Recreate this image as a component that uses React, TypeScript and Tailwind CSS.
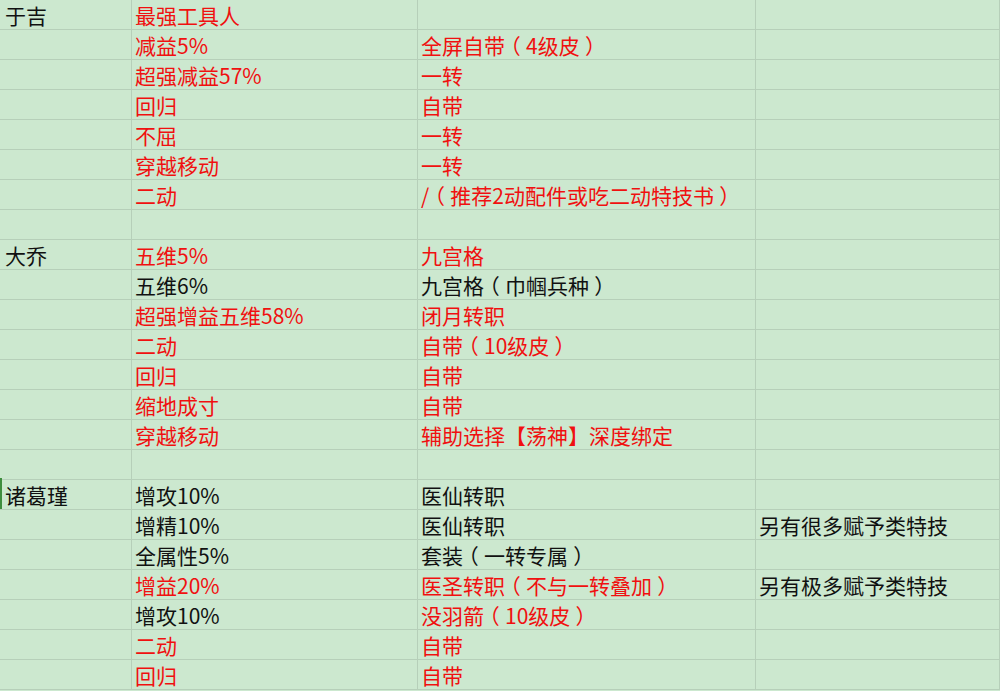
import React from "react";

type Cell = { text: string; red?: boolean };
type Row = [Cell, Cell, Cell, Cell];

const R = (text: string): Cell => ({ text, red: true });
const B = (text: string): Cell => ({ text });
const E: Cell = { text: "" };

const rows: Row[] = [
  [B("于吉"), R("最强工具人"), E, E],
  [E, R("减益5%"), R("全屏自带（4级皮）"), E],
  [E, R("超强减益57%"), R("一转"), E],
  [E, R("回归"), R("自带"), E],
  [E, R("不屈"), R("一转"), E],
  [E, R("穿越移动"), R("一转"), E],
  [E, R("二动"), R("/（推荐2动配件或吃二动特技书）"), E],
  [E, E, E, E],
  [B("大乔"), R("五维5%"), R("九宫格"), E],
  [E, B("五维6%"), B("九宫格（巾帼兵种）"), E],
  [E, R("超强增益五维58%"), R("闭月转职"), E],
  [E, R("二动"), R("自带（10级皮）"), E],
  [E, R("回归"), R("自带"), E],
  [E, R("缩地成寸"), R("自带"), E],
  [E, R("穿越移动"), R("辅助选择【荡神】深度绑定"), E],
  [E, E, E, E],
  [B("诸葛瑾"), B("增攻10%"), B("医仙转职"), E],
  [E, B("增精10%"), B("医仙转职"), B("另有很多赋予类特技")],
  [E, B("全属性5%"), B("套装（一转专属）"), E],
  [E, R("增益20%"), R("医圣转职（不与一转叠加）"), B("另有极多赋予类特技")],
  [E, B("增攻10%"), R("没羽箭（10级皮）"), E],
  [E, R("二动"), R("自带"), E],
  [E, R("回归"), R("自带"), E],
];

// full-width parens sit centred in their box, as in the sheet's font
function Text({ s }: { s: string }) {
  const parts = s.split(/([（）])/);
  return (
    <>
      {parts.map((p, i) =>
        p === "（" || p === "）" ? (
          <span key={i} className="inline-block w-[1em] text-center [font-feature-settings:'halt']">
            {p}
          </span>
        ) : (
          <React.Fragment key={i}>{p}</React.Fragment>
        )
      )}
    </>
  );
}

export default function App() {
  return (
    <div
      className="w-[1000px] h-[691px] overflow-hidden bg-[#cce8cf] text-[21px] text-[#111]"
      style={{ fontFamily: '"Microsoft YaHei", "Noto Sans CJK SC", sans-serif' }}
    >
      <div className="grid grid-cols-[132px_286px_338px_1fr]">
        {rows.map((row, ri) =>
          row.map((c, ci) => (
            <div
              key={`${ri}-${ci}`}
              className={`relative h-[30px] border-b border-r border-[#b6cfb9] leading-[30px] whitespace-nowrap ${
                c.red ? "text-[#f01010]" : "text-[#111]"
              } ${ci === 0 ? "pl-[5px]" : "pl-[3px]"}`}
            >
              {ri === 16 && ci === 0 && (
                <span className="absolute left-0 top-[-2px] h-[31px] w-[2px] bg-[#3e8e3e]" />
              )}
              <Text s={c.text} />
            </div>
          ))
        )}
      </div>
    </div>
  );
}
